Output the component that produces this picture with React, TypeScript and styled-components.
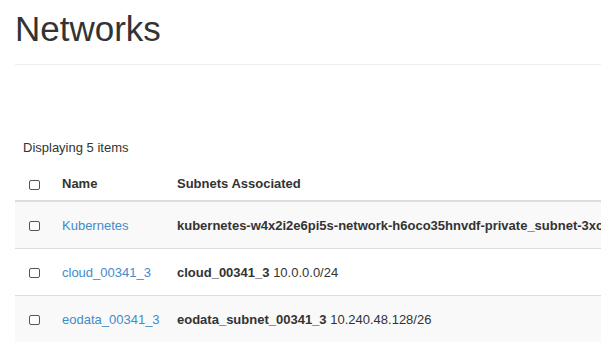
import React from "react";
import styled, { createGlobalStyle } from "styled-components";

const Global = createGlobalStyle`
  html, body { margin: 0; padding: 0; background: #fff; overflow: hidden; }
  body { font-family: "Liberation Sans", Arial, sans-serif; color: #333; }
`;

const Page = styled.div`
  padding: 0 0 0 15px;
  width: 586px;
  overflow: hidden;
`;

const Header = styled.div`
  height: 64px;
  border-bottom: 1px solid #eee;
  display: flex;
  align-items: flex-start;
`;

const Title = styled.h1`
  margin: 9px 0 0 0;
  font-size: 35px;
  font-weight: 400;
  line-height: 40px;
  color: #333;
`;

const Caption = styled.div`
  margin-top: 74px;
  padding-left: 8px;
  font-size: 13px;
  line-height: 18px;
  color: #333;
`;

const Table = styled.div`
  margin-top: 10px;
  width: 900px;
`;

const Row = styled.div<{ $striped?: boolean; $head?: boolean }>`
  display: grid;
  grid-template-columns: 47px 115px 1fr;
  align-items: center;
  height: ${(p) => (p.$head ? "33px" : "46px")};
  background: ${(p) => (p.$striped ? "#f9f9f9" : "#fff")};
  border-bottom: ${(p) => (p.$head ? "2px solid #ddd" : "1px solid #ddd")};
  font-size: 13px;
  white-space: nowrap;
`;

const CheckCell = styled.div`
  display: flex;
  padding-left: 14px;
  padding-top: 2px;
`;

const Box = styled.span`
  display: inline-block;
  width: 9px;
  height: 8px;
  border: 1px solid #555;
  border-radius: 2px;
  background: #fff;
`;

const HeadCell = styled.div`
  font-weight: 700;
  color: #333;
`;

const Link = styled.a`
  color: #428bca;
  text-decoration: none;
`;

const Subnet = styled.div`
  color: #333;
`;

const Bold = styled.b`
  font-weight: 700;
`;

const rows = [
  { name: "Kubernetes", subnet: "kubernetes-w4x2i2e6pi5s-network-h6oco35hnvdf-private_subnet-3xc4rtmy", cidr: "" },
  { name: "cloud_00341_3", subnet: "cloud_00341_3", cidr: "10.0.0.0/24" },
  { name: "eodata_00341_3", subnet: "eodata_subnet_00341_3", cidr: "10.240.48.128/26" },
];

export default function App() {
  return (
    <>
      <Global />
      <Page>
        <Header>
          <Title>Networks</Title>
        </Header>
        <Caption>Displaying 5 items</Caption>
        <Table>
          <Row $head>
            <CheckCell><Box /></CheckCell>
            <HeadCell>Name</HeadCell>
            <HeadCell>Subnets Associated</HeadCell>
          </Row>
          {rows.map((r, i) => (
            <Row key={r.name} $striped={i % 2 === 0}>
              <CheckCell><Box /></CheckCell>
              <div><Link href="#">{r.name}</Link></div>
              <Subnet>
                <Bold>{r.subnet}</Bold>{r.cidr ? " " + r.cidr : ""}
              </Subnet>
            </Row>
          ))}
        </Table>
      </Page>
    </>
  );
}
